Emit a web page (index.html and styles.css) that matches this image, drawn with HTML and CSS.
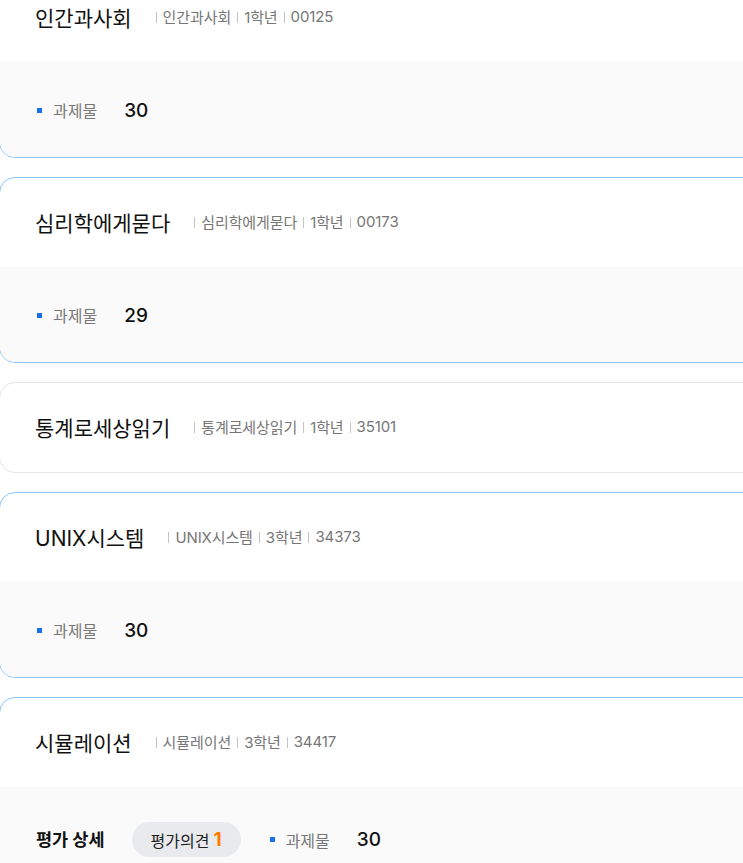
FILE: index.html
```html
<!DOCTYPE html>
<html lang="ko">
<head>
<meta charset="utf-8">
<title>강의 목록</title>
<link rel="stylesheet" href="styles.css">
</head>
<body>
<div class="list">
  <div class="card card-active card-first">
    <div class="card-head">
      <span class="title">인간과사회</span>
      <span class="meta"><i class="sep"></i>인간과사회<i class="sep"></i>1학년<i class="sep"></i>00125</span>
    </div>
    <div class="card-body">
      <span class="stat"><i class="dot"></i><span class="label">과제물</span><span class="num">30</span></span>
    </div>
  </div>

  <div class="card card-active">
    <div class="card-head">
      <span class="title">심리학에게묻다</span>
      <span class="meta"><i class="sep"></i>심리학에게묻다<i class="sep"></i>1학년<i class="sep"></i>00173</span>
    </div>
    <div class="card-body">
      <span class="stat"><i class="dot"></i><span class="label">과제물</span><span class="num">29</span></span>
    </div>
  </div>

  <div class="card">
    <div class="card-head">
      <span class="title">통계로세상읽기</span>
      <span class="meta"><i class="sep"></i>통계로세상읽기<i class="sep"></i>1학년<i class="sep"></i>35101</span>
    </div>
  </div>

  <div class="card card-active">
    <div class="card-head">
      <span class="title">UNIX시스템</span>
      <span class="meta"><i class="sep"></i>UNIX시스템<i class="sep"></i>3학년<i class="sep"></i>34373</span>
    </div>
    <div class="card-body">
      <span class="stat"><i class="dot"></i><span class="label">과제물</span><span class="num">30</span></span>
    </div>
  </div>

  <div class="card card-active">
    <div class="card-head">
      <span class="title">시뮬레이션</span>
      <span class="meta"><i class="sep"></i>시뮬레이션<i class="sep"></i>3학년<i class="sep"></i>34417</span>
    </div>
    <div class="card-body card-body-detail">
      <span class="detail-title">평가 상세</span>
      <span class="pill">평가의견 <b class="pill-count">1</b></span>
      <span class="stat"><i class="dot"></i><span class="label">과제물</span><span class="num">30</span></span>
    </div>
  </div>
</div>
</body>
</html>
```

FILE: styles.css
```css
html, body {
  margin: 0;
  padding: 0;
  background: #ffffff;
  overflow: hidden;
}

body {
  font-family: "Inter", "Noto Sans CJK KR", "Noto Sans", sans-serif;
  color: #111111;
}

.list {
  display: flex;
  flex-direction: column;
  gap: 19px;
  width: 820px;
  margin-left: -1px;
}

.card {
  border: 1px solid #e6e6e6;
  border-radius: 16px;
  background: #ffffff;
  overflow: hidden;
}

.card-active {
  border-color: #8ec3fb;
}

.card-first {
  margin-top: -28px;
}

.card-head {
  height: 89px;
  display: flex;
  align-items: center;
  padding-left: 35px;
  padding-bottom: 2px;
  box-sizing: border-box;
}

.title {
  font-size: 21px;
  font-weight: 400;
  color: #111111;
}

.meta {
  margin-left: 24px;
  font-size: 15px;
  color: #767676;
  display: flex;
  align-items: center;
  letter-spacing: -0.1px;
}

.sep {
  display: inline-block;
  width: 1px;
  height: 11px;
  background: #c4c4c4;
  margin: 1px 6px 0 6px;
}

.meta .sep:first-child {
  margin-left: 0;
}

.card-body {
  height: 95px;
  background: #fafafa;
  display: flex;
  align-items: center;
  padding-left: 36px;
  padding-top: 1px;
  box-sizing: border-box;
}

.card-body-detail {
  height: 120px;
  align-items: flex-start;
  padding-top: 35px;
}

.stat {
  display: flex;
  align-items: center;
  height: 35px;
}

.dot {
  display: inline-block;
  width: 5px;
  height: 5px;
  background: #1a6ff0;
  margin-left: 1px;
  margin-right: 11px;
}

.label {
  font-size: 16px;
  color: #777777;
}

.num {
  margin-left: 27px;
  font-size: 19px;
  font-weight: 500;
  color: #111111;
}

.detail-title {
  font-size: 17.5px;
  font-weight: 700;
  color: #111111;
  height: 35px;
  line-height: 35px;
}

.pill {
  margin-left: 27px;
  margin-right: 28px;
  height: 35px;
  padding: 0 19px;
  border-radius: 18px;
  background: #e9eaee;
  display: inline-flex;
  align-items: center;
  font-size: 16px;
  color: #222222;
}

.pill-count {
  margin-left: 4px;
  font-size: 19px;
  font-weight: 700;
  color: #ff7a00;
}
```
